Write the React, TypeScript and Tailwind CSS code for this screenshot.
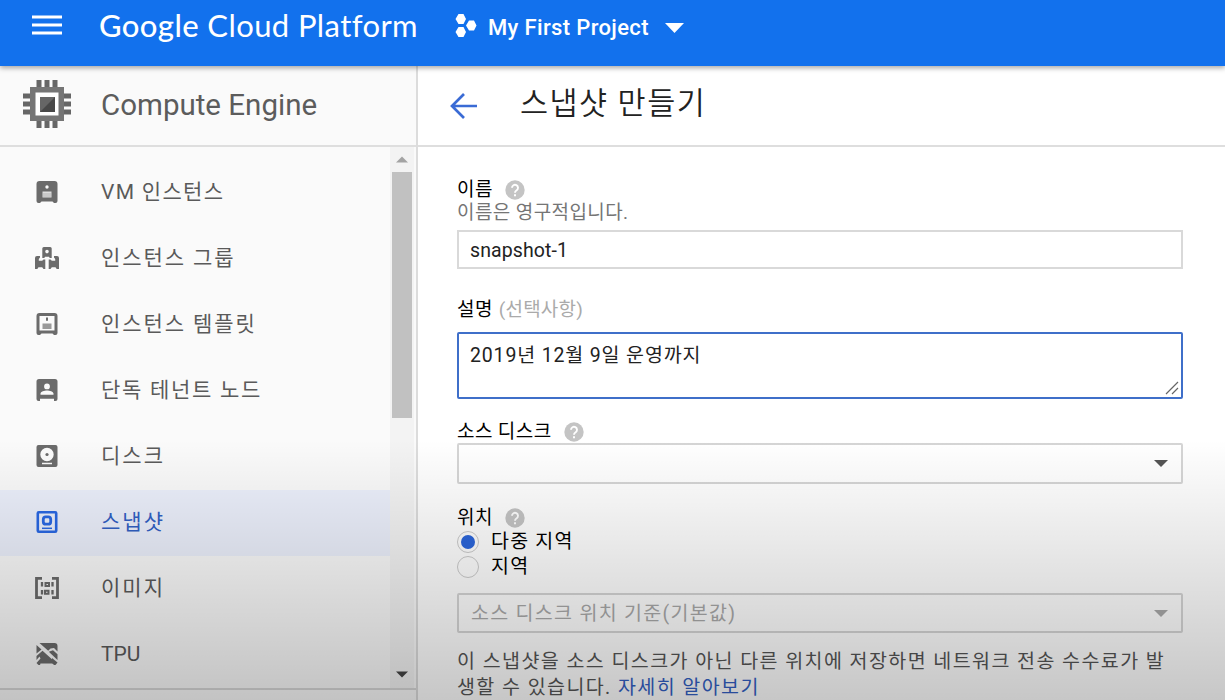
import React from 'react';
import clsx from 'clsx';

const kr = "font-[Roboto,'Noto_Sans_CJK_KR',sans-serif]";

const VmIcon = () => (
  <svg width="24" height="24" viewBox="0 0 24 24" fill="currentColor">
    <path fillRule="evenodd" d="M4.500 1h15a3 3 0 0 1 3 3V21a2 2 0 0 1-2 2h-1.500l-1.500-1.500h-11L5 23H3.500a2 2 0 0 1-2-2V4a3 3 0 0 1 3-3ZM12 5.300a1.700 1.700 0 1 0 0 3.400 1.700 1.700 0 0 0 0-3.400Z" />
    <path d="M7.500 11.500h9v6h-9z" fill="#dedede" />
    <path d="M7.500 14h9M7.500 16h9" stroke="#aaa" strokeWidth="0.800" />
  </svg>
);

const GroupIcon = () => (
  <svg width="24" height="24" viewBox="0 0 24 24" fill="currentColor">
    <path fillRule="evenodd" d="M8.800 1h6.400a1.500 1.500 0 0 1 1.500 1.500V12h-2l-.700-1.300h-4L9.300 12h-2V2.500A1.500 1.500 0 0 1 8.800 1Zm3.200 2.800a1.800 1.800 0 1 0 0 3.600 1.800 1.800 0 0 0 0-3.600Z" />
    <path d="M0 12a2 2 0 0 1 2-2h3v1.500L3.800 13v1.800h3.400L8.500 13.500h1.800V23H8.500l-1.300-1.700H3.500L2.300 23H0ZM24 12a2 2 0 0 0-2-2h-3v1.500l1.200 1.500v1.800h-3.400l-1.300-1.300h-1.800V23h1.800l1.300-1.700h3.700l1.200 1.700H24Z" />
  </svg>
);

const TemplateIcon = () => (
  <svg width="24" height="24" viewBox="0 0 24 24" fill="currentColor">
    <path fillRule="evenodd" d="M4.500 1h15a3 3 0 0 1 3 3V21a2 2 0 0 1-2 2H19l-1.500-1.500h-11L5 23H3.500a2 2 0 0 1-2-2V4a3 3 0 0 1 3-3Zm0 3v14.500h15V4Z" />
    <path d="M11 5.500h2v3.300h-2z" />
    <path d="M7.500 11.500h9v5.500h-9z" fill="#999" />
  </svg>
);

const TenantIcon = () => (
  <svg width="24" height="24" viewBox="0 0 24 24" fill="currentColor">
    <path fillRule="evenodd" d="M4 1h16a2.500 2.500 0 0 1 2.500 2.500V21a2 2 0 0 1-2 2H19v-2.200H5V23H3.500a2 2 0 0 1-2-2V3.500A2.500 2.500 0 0 1 4 1Zm8 4.500a2.900 2.900 0 1 0 0 5.800 2.900 2.900 0 0 0 0-5.800Zm-6.500 11.200h13v-1.200c0-2-4-3.100-6.500-3.100s-6.500 1.100-6.500 3.100Z" />
  </svg>
);

const DiskIcon = () => (
  <svg width="24" height="24" viewBox="0 0 24 24" fill="currentColor">
    <path fillRule="evenodd" d="M3.500 1h17a2 2 0 0 1 2 2v18a2 2 0 0 1-2 2h-17a2 2 0 0 1-2-2V3a2 2 0 0 1 2-2ZM12 3.800a6.700 6.700 0 1 0 0 13.400 6.700 6.700 0 0 0 0-13.400ZM7 18.700v1.500h10v-1.500Z" />
    <circle cx="12" cy="10.500" r="1.600" />
  </svg>
);

const SnapshotIcon = () => (
  <svg width="24" height="24" viewBox="0 0 24 24" fill="none" stroke="currentColor">
    <rect x="2.800" y="2.300" width="18.400" height="19.400" rx="1" strokeWidth="2.600" />
    <rect x="8.300" y="6.800" width="7.400" height="7.400" rx="2.500" strokeWidth="2.800" />
    <path d="M7 18.300h10" strokeWidth="1.500" />
  </svg>
);

const ImageIcon = () => (
  <svg width="24" height="24" viewBox="0 0 24 24" fill="none" stroke="currentColor">
    <path d="M7 2.300H1.500v19.400H7M17 2.300h5.500v19.400H17" strokeWidth="2.800" />
    <path d="M7 6v4.500M17.500 6v4.500M7 14v4.500M17.500 14v4.500" strokeWidth="2.300" />
    <path d="M10.500 7h3.500v3h-3.500zM10 14.700h3.500v3H10z" strokeWidth="2" />
  </svg>
);

const TpuIcon = () => (
  <svg width="24" height="24" viewBox="0 0 24 24" fill="currentColor">
    <path d="M4.500 1h15a3 3 0 0 1 3 3v5.500L19 6l-3.500.500-2.300 2.300L4.500 1ZM1.500 3l5 4.500-5 4ZM1.500 14 7.500 8.700l12 10.800v2H5.500L5 23H3.500l-2-2 4-4.500-1-2-3 3.500ZM13.800 9.700l4.200-1.500 4.500 4V18Z" />
    <path d="m17 16 5.500 4.500-2 2.500H19l-2-2Z" />
  </svg>
);

const menu = [
  { label: 'VM 인스턴스', icon: VmIcon, tracking: 'tracking-[1.300px]' },
  { label: '인스턴스 그룹', icon: GroupIcon, tracking: 'tracking-[1.900px]' },
  { label: '인스턴스 템플릿', icon: TemplateIcon, tracking: 'tracking-[1.900px]' },
  { label: '단독 테넌트 노드', icon: TenantIcon, tracking: 'tracking-[1.700px]' },
  { label: '디스크', icon: DiskIcon, tracking: 'tracking-[2px]' },
  { label: '스냅샷', icon: SnapshotIcon, tracking: 'tracking-[2px]', active: true },
  { label: '이미지', icon: ImageIcon, tracking: 'tracking-[2px]' },
  { label: 'TPU', icon: TpuIcon, tracking: 'tracking-normal' },
];

const Help = () => (
  <svg width="20" height="20" viewBox="0 0 20 20" className="shrink-0">
    <circle cx="10" cy="10" r="9.700" fill="#c4c4c4" />
    <path d="M7 7.800a3 3 0 1 1 4.700 2.500C10.500 11.100 10 11.500 10 12.700" fill="none" stroke="#fff" strokeWidth="1.900" />
    <path d="M9 14.200h2v2H9z" fill="#fff" />
  </svg>
);

const Caret = ({ className }: { className?: string }) => (
  <svg width="14" height="7" viewBox="0 0 14 7" fill="currentColor" className={className}>
    <path d="M0 0h14L7 7Z" />
  </svg>
);

const Header = () => (
  <header className="relative z-10 flex h-[66px] shrink-0 bg-[#1271ed] text-white shadow-[0_2px_5px_rgba(0,0,0,0.35)]">
    <svg width="30" height="20" viewBox="0 0 30 20" className="mt-[15px] ml-8" fill="none" stroke="#fff" strokeWidth="3">
      <path d="M0 2h30M0 10h30M0 18h30" />
    </svg>
    <div className="mt-[5px] ml-[37px] w-[356px] text-[31px] leading-[40px] tracking-[0.400px] whitespace-nowrap font-[Lato,sans-serif]">
      <span className="font-medium">Google</span> Cloud Platform
    </div>
    <svg width="22" height="24" viewBox="0 0 22 24" fill="#fff" className="mt-[14px]">
      <path d="M3.500 0h5L11 5 8.500 10h-5L.500 5ZM14 6.500h5L21.500 11.500 19 16.500h-5L11 11.500ZM3.500 13h5L11 18l-2.500 5h-5L.500 18Z" />
    </svg>
    <span className="mt-[12px] ml-[11px] w-[166px] text-[22px] leading-[32px] font-medium tracking-[0.350px] whitespace-nowrap">My First Project</span>
    <svg width="19" height="10" viewBox="0 0 19 10" fill="#fff" className="mt-[23px] ml-[11px]">
      <path d="M0 0h19L9.500 10Z" />
    </svg>
  </header>
);

const Sidebar = () => (
  <aside className="flex w-[418px] shrink-0 flex-col border-r-2 border-[#dcdcdc] bg-[#fafafa]">
    <div className="flex h-[81px] shrink-0 border-b-2 border-[#dedede]">
      <svg width="50" height="50" viewBox="0 0 50 50" className="mt-[13px] ml-[22px]">
        <path d="M17 1v48M25 1v48M33 1v48M1 17h48M1 25h48M1 33h48" stroke="#666" strokeWidth="5" />
        <path d="M8 8h34v34H8z" fill="#757575" />
        <path d="M13.500 13.500h23v23h-23z" fill="#fff" />
        <path d="M18 18h15v15H18z" fill="#666" />
        <path d="M33 18v15H18z" fill="#484848" />
      </svg>
      <h2 className="mt-[19px] ml-[29px] text-[29.500px] leading-[40px] whitespace-nowrap text-[#5c5c5c]">Compute Engine</h2>
    </div>
    <div className="flex h-[543px] shrink-0 overflow-hidden border-b-2 border-[#d8d8d8]">
      <nav className="w-[390px] pt-[13px]">
        {menu.map(({ label, icon: Icon, tracking, active }) => (
          <div
            key={label}
            className={clsx('flex h-[66px] items-center pl-[35px]', active ? 'bg-[#ecf0fc] text-[#2a68e4]' : 'text-[#6b6b6b]')}
          >
            <div className="-mt-[2px]">
              <Icon />
            </div>
            <span className={clsx('ml-[42px] text-[21px] whitespace-nowrap', tracking, active ? 'text-[#3160c4]' : 'text-[#5a5a5a]')}>
              {label}
            </span>
          </div>
        ))}
      </nav>
      <div className="flex w-6 flex-col items-center bg-[#f3f3f3]">
        <Caret className="mt-[9px] h-[7px] w-3 shrink-0 rotate-180 text-[#a3a3a3]" />
        <div className="mt-[9px] h-[246px] w-5 shrink-0 bg-[#c1c1c1]" />
        <Caret className="mt-auto mb-[10px] h-[7px] w-3 shrink-0 text-[#444]" />
      </div>
    </div>
  </aside>
);

const SnapshotForm = () => (
  <form className="flex flex-col pt-[31px] pr-[42px] pl-[39px] text-[19px] leading-[24px] tracking-[0.400px] text-black">
    <div className="flex h-[23px] items-center gap-3">
      <label>이름</label>
      <Help />
    </div>
    <p className="h-[23px] whitespace-nowrap text-[#757575]">이름은 영구적입니다.</p>
    <div className="mt-[6px] flex h-[39px] items-center border-2 border-[#d9d9d9] pt-[3px] pl-[11px] text-[19.500px] tracking-[0.100px] text-[#222]">snapshot-1</div>
    <div className="mt-[29px] flex gap-[6px]">
      <label>설명</label>
      <span className="tracking-[0.200px] text-[#aaa]">(선택사항)</span>
    </div>
    <div className="relative mt-[10px] h-[67px] rounded-[2px] border-2 border-[#3f6fc9] pt-[10px] pl-[11px] text-[19.500px] tracking-[0.850px] whitespace-nowrap text-[#222]">
      2019년 12월 9일 운영까지
      <svg width="14" height="14" viewBox="0 0 14 14" className="absolute right-[2px] bottom-[2px]" stroke="#666" strokeWidth="1.200">
        <path d="M1 13 13 1M7 13l6-6" />
      </svg>
    </div>
    <div className="mt-[21px] flex h-[23px] items-center gap-3">
      <label>소스 디스크</label>
      <Help />
    </div>
    <div className="flex h-[41px] items-center justify-end rounded-[2px] border-2 border-[#d5d5d5] pr-[13px] text-[#555]">
      <Caret />
    </div>
    <div className="mt-[22px] flex h-[23px] items-center gap-3">
      <label>위치</label>
      <Help />
    </div>
    <div className="flex h-[25px] items-center gap-3 text-[19.500px] tracking-[1.200px]">
      <span className="flex size-[22px] items-center justify-center rounded-full border border-[#ccc]">
        <span className="size-[14px] rounded-full bg-[#2c66db]" />
      </span>
      <span>다중 지역</span>
    </div>
    <div className="flex h-[26px] items-center gap-3 text-[19.500px] tracking-[1.200px]">
      <span className="size-[22px] rounded-full border border-[#ccc]" />
      <span>지역</span>
    </div>
    <div className="mt-[13px] flex h-[40px] items-center justify-between rounded-[2px] border-2 border-[#d6d6d6] pr-[13px] pl-3 text-[19.500px] tracking-[1.300px] text-[#aaa]">
      <span className="pt-[2px]">소스 디스크 위치 기준(기본값)</span>
      <Caret />
    </div>
    <p className="mt-4 text-[19.500px] leading-[26px] tracking-[1.430px] whitespace-nowrap text-[#555]">
      이 스냅샷을 소스 디스크가 아닌 다른 위치에 저장하면 네트워크 전송 수수료가 발
      <br />
      생할 수 있습니다. <span className="text-[#3260c4]">자세히 알아보기</span>
    </p>
  </form>
);

const App: React.FC = () => {
  return (
    <div className={clsx('relative flex h-[700px] w-[1225px] flex-col overflow-hidden bg-white', kr)}>
      <Header />
      <div className="flex min-h-0 flex-1">
        <Sidebar />
        <main className="flex min-w-0 flex-1 flex-col">
          <div className="flex h-[81px] shrink-0 border-b-2 border-[#dedede]">
            <svg width="27" height="26" viewBox="0 0 27 26" className="mt-[27px] ml-[32px]" fill="none" stroke="#3a6bd5" strokeWidth="2.700">
              <path d="M27 13H2M14 1 2 13l12 12" />
            </svg>
            <h1 className="mt-[16px] ml-[43px] text-[30.500px] leading-[44px] tracking-[1.500px] whitespace-nowrap text-[#222] [font-weight:350]">스냅샷 만들기</h1>
          </div>
          <SnapshotForm />
        </main>
      </div>
      {/* bottom shade */}
      <div className="pointer-events-none absolute inset-x-0 bottom-0 h-[260px] bg-linear-to-b from-black/0 to-black/22" />
    </div>
  );
};

export default App;
